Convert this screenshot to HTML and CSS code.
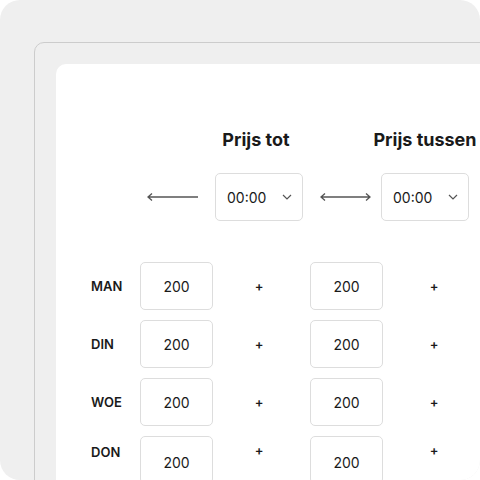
FILE: index.html
```html
<!DOCTYPE html>
<html lang="nl">
<head>
    <meta charset="UTF-8">
    <meta name="viewport" content="width=device-width, initial-scale=1.0">
    <title>Prijzen per dag</title>
    <link rel="stylesheet" href="styles.css">
</head>
<body>
<div class="frame">
    <div class="window">
        <div class="panel">
            <div class="head-row">
                <div class="spacer-arrow"></div>
                <div class="heading heading-first">Prijs tot</div>
                <div class="spacer-arrow"></div>
                <div class="heading heading-last">Prijs tussen</div>
            </div>
            <div class="select-row">
                <svg class="arrow" width="51" height="10" viewBox="0 0 51 10">
                    <path d="M1 5 H51 M5 1.5 L1 5 L5 8.5" fill="none" stroke="#555" stroke-width="1.3"/>
                </svg>
                <div class="select">
                    <span>00:00</span>
                    <svg width="10" height="6" viewBox="0 0 10 6"><path d="M1 1 L5 5 L9 1" fill="none" stroke="#555" stroke-width="1.2"/></svg>
                </div>
                <svg class="arrow" width="51" height="10" viewBox="0 0 51 10">
                    <path d="M1 5 H50 M5 1.5 L1 5 L5 8.5 M46 1.5 L50 5 L46 8.5" fill="none" stroke="#555" stroke-width="1.3"/>
                </svg>
                <div class="select select-last">
                    <span>00:00</span>
                    <svg width="10" height="6" viewBox="0 0 10 6"><path d="M1 1 L5 5 L9 1" fill="none" stroke="#555" stroke-width="1.2"/></svg>
                </div>
            </div>

            <div class="days">
                <div class="day">
                    <div class="day-name">MAN</div>
                    <div class="price">200</div><div class="plus">+</div>
                    <div class="price">200</div><div class="plus plus-second">+</div>
                    <div class="price"></div>
                </div>
                <div class="day">
                    <div class="day-name">DIN</div>
                    <div class="price">200</div><div class="plus">+</div>
                    <div class="price">200</div><div class="plus plus-second">+</div>
                    <div class="price"></div>
                </div>
                <div class="day">
                    <div class="day-name">WOE</div>
                    <div class="price">200</div><div class="plus">+</div>
                    <div class="price">200</div><div class="plus plus-second">+</div>
                    <div class="price"></div>
                </div>
                <div class="day day-top">
                    <div class="day-name">DON</div>
                    <div class="price">200</div><div class="plus">+</div>
                    <div class="price">200</div><div class="plus plus-second">+</div>
                    <div class="price"></div>
                </div>
            </div>
        </div>
    </div>
</div>
</body>
</html>
```

FILE: styles.css
```css
body {
    margin: 0;
    background-color: #ffffff;
    font-family: Inter, "Liberation Sans", sans-serif;
    color: #1a1a1a;
}
.frame {
    width: 480px;
    height: 480px;
    background-color: #efefef;
    border-radius: 20px;
    overflow: hidden;
    padding: 42px 0 0 34px;
    box-sizing: border-box;
}
.window {
    width: 600px;
    height: 600px;
    border: 1px solid #cccccc;
    border-radius: 10px;
    padding: 21px 0 0 21px;
    box-sizing: border-box;
}
.panel {
    width: 600px;
    height: 600px;
    background-color: #ffffff;
    border-radius: 10px;
    padding: 64px 0 0 35px;
    box-sizing: border-box;
}
.head-row,
.select-row {
    display: flex;
    align-items: center;
    margin-left: 56px;
}
.spacer-arrow {
    width: 51px;
    margin-right: 17px;
}
.head-row .heading-first + .spacer-arrow {
    margin-right: 10px;
}
.heading {
    width: 88px;
    margin-right: 17px;
    display: flex;
    justify-content: center;
    white-space: nowrap;
    font-size: 18px;
    font-weight: 700;
    line-height: 24px;
    box-sizing: border-box;
}
.heading-first {
    padding-right: 6px;
}
.heading-last {
    margin-right: 0;
}
.select-row {
    margin-top: 21px;
}
.arrow {
    display: block;
    margin-right: 17px;
}
.select {
    width: 88px;
    height: 48px;
    border: 1px solid #dddddd;
    border-radius: 5px;
    box-sizing: border-box;
    display: flex;
    align-items: center;
    justify-content: space-between;
    padding: 0 10px 0 11px;
    font-size: 14px;
    margin-right: 17px;
}
.select + .arrow {
    margin-right: 10px;
}
.select-last {
    margin-right: 0;
}
.days {
    margin-top: 41px;
    display: flex;
    flex-direction: column;
    gap: 10px;
}
.day {
    display: flex;
    align-items: center;
}
.day-top {
    align-items: flex-start;
}
.day-name {
    width: 49px;
    font-size: 13px;
    font-weight: 600;
}
.day-top .day-name {
    padding-top: 8px;
}
.price {
    width: 73px;
    height: 48px;
    border: 1px solid #dddddd;
    border-radius: 5px;
    box-sizing: border-box;
    display: flex;
    align-items: center;
    justify-content: center;
    font-size: 14px;
    flex-shrink: 0;
}
.day-top .price {
    padding-top: 4px;
}
.plus {
    width: 97px;
    padding-right: 5px;
    box-sizing: border-box;
    text-align: center;
    font-size: 13px;
    font-weight: 600;
    flex-shrink: 0;
}
.plus-second {
    padding-right: 0;
    padding-left: 5px;
}
.day-top .plus {
    padding-top: 6px;
}
```
